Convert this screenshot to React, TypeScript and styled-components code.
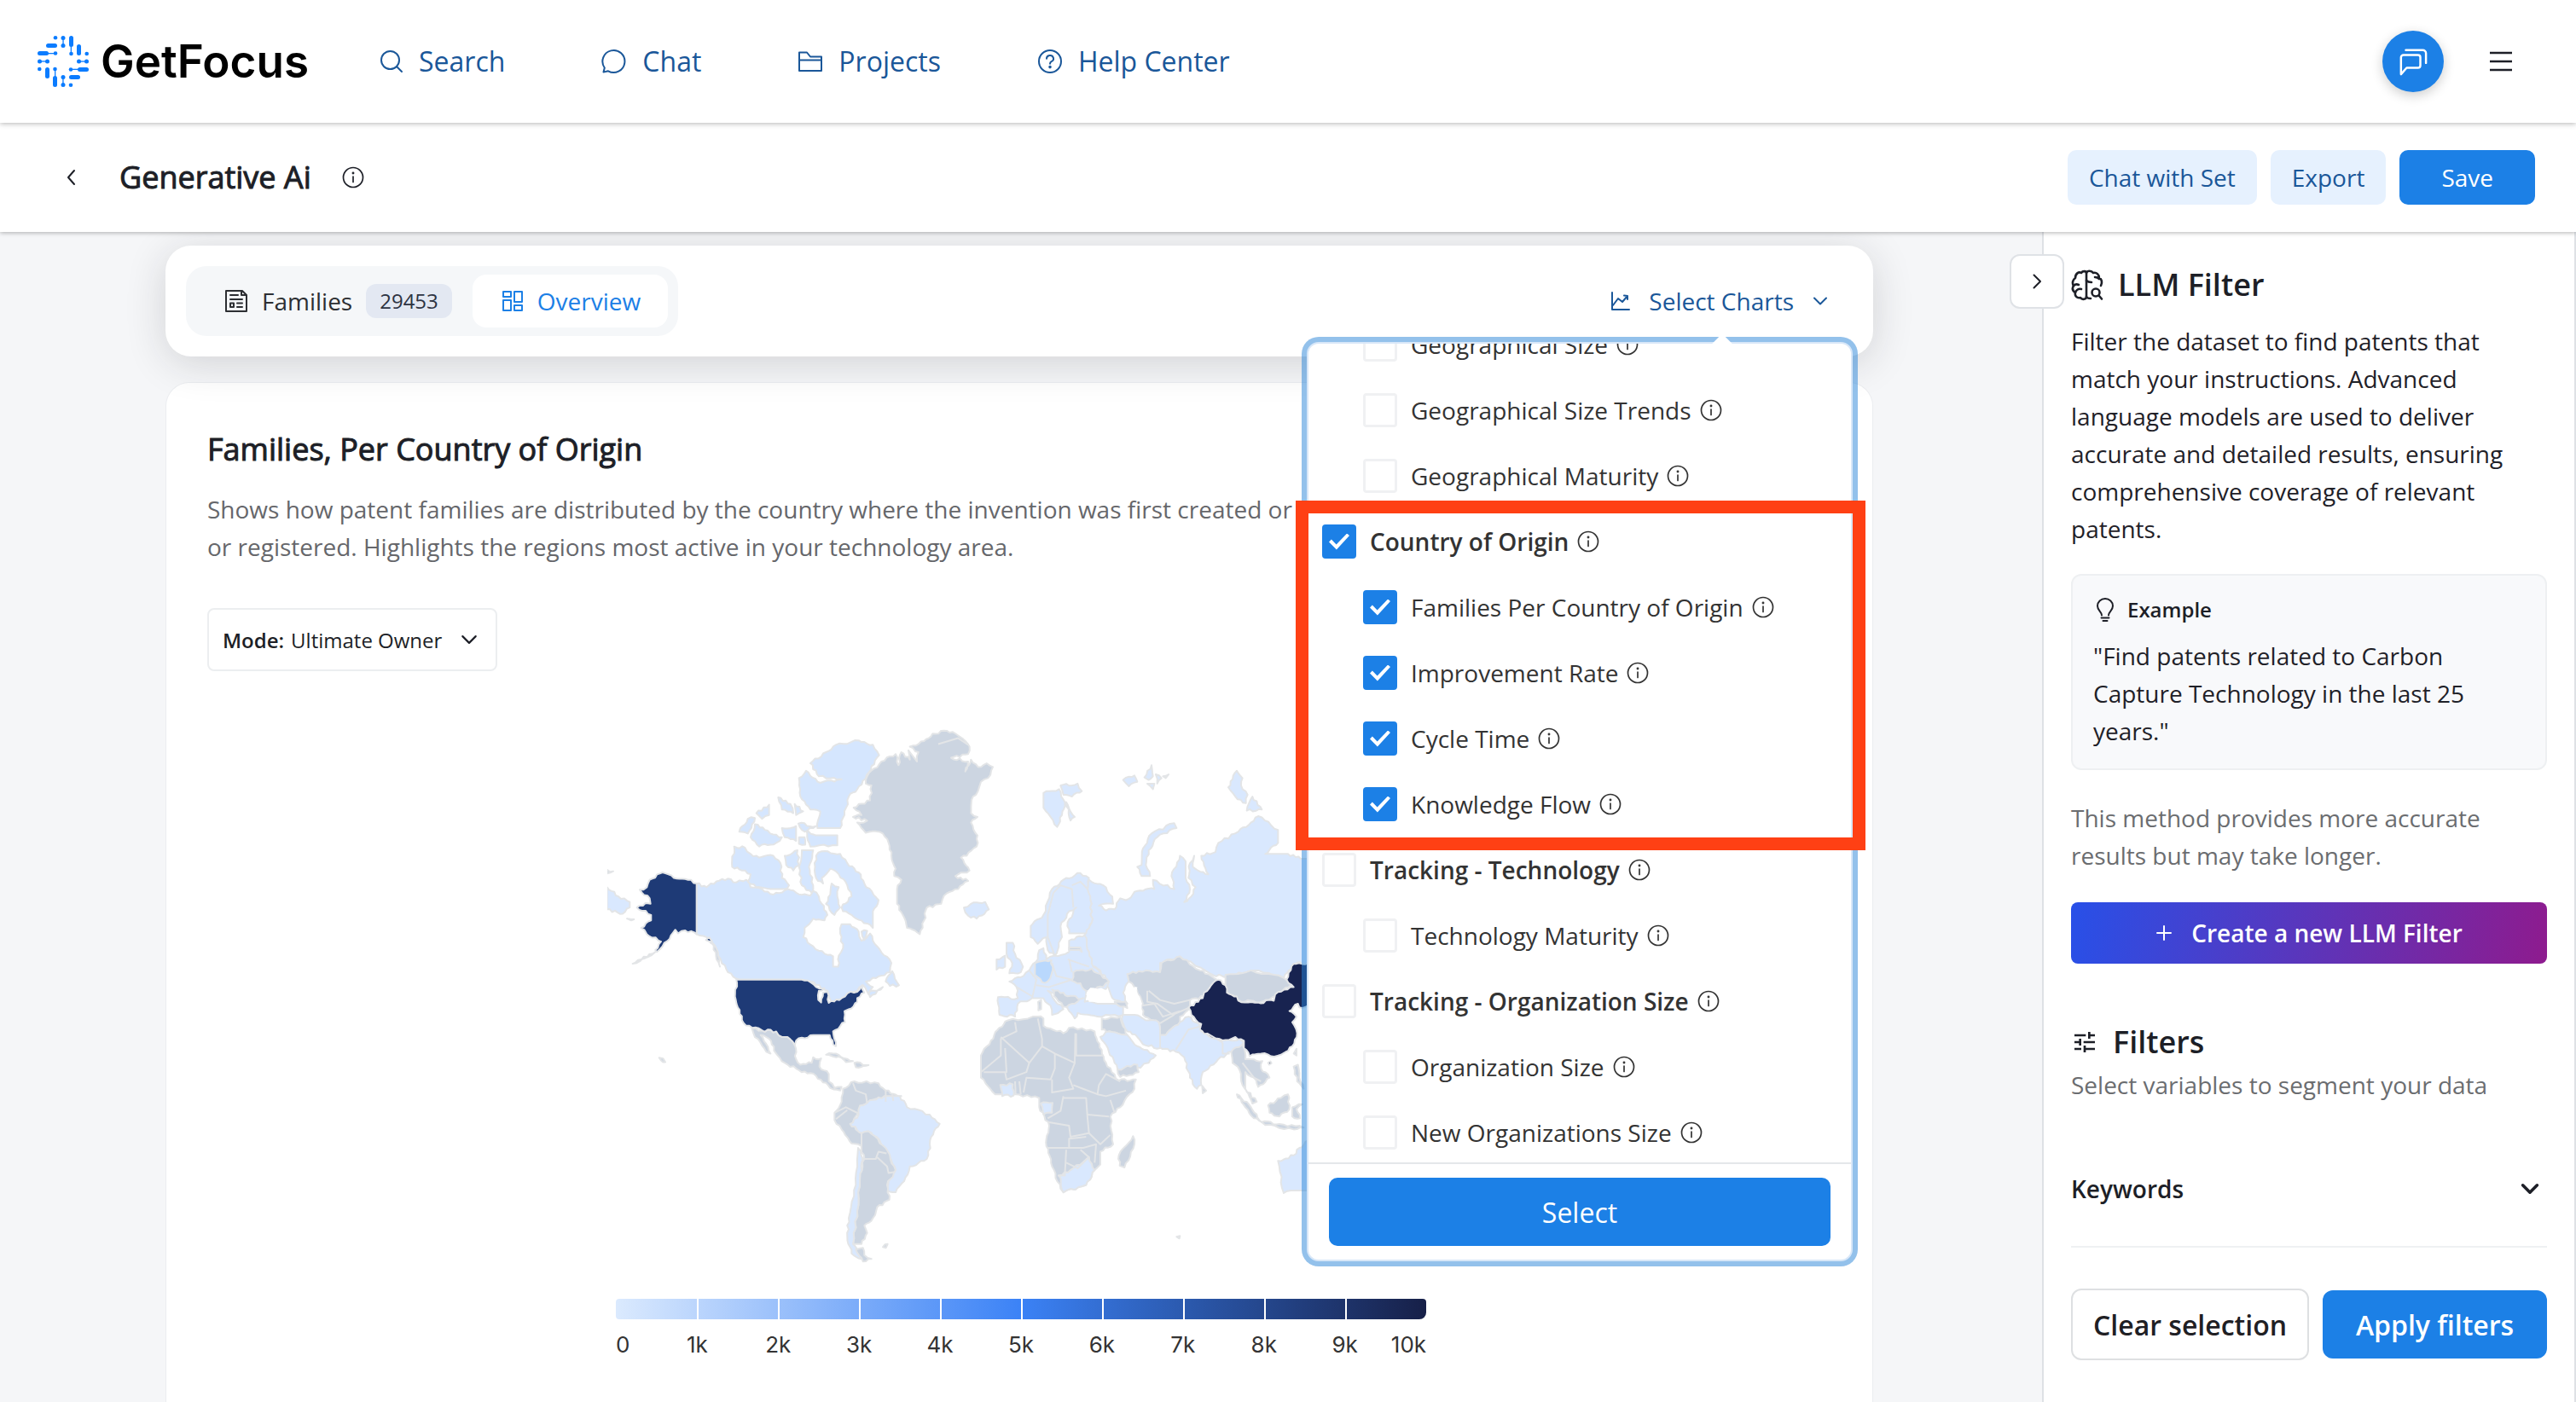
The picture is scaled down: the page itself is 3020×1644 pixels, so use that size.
import React from 'react';
import styled, { createGlobalStyle } from 'styled-components';
import { MdTune } from 'react-icons/md';

const GlobalStyle = createGlobalStyle`
  * { box-sizing: border-box; }
  body { margin: 0; background: #f5f6f8; color: #1d1f27; font-family: "Open Sans", "Noto Sans", sans-serif; }
  button, input, select { font: inherit; color: inherit; }
  h1, h2, h3, p { margin: 0; }
`;

/* ---------- icons ---------- */

const Icon = styled.svg<{ $size: number; $weight?: number }>`
  width: ${p => p.$size}px;
  height: ${p => p.$size}px;
  flex: none;
  fill: none;
  stroke: currentColor;
  stroke-width: ${p => p.$weight ?? 2};
  stroke-linecap: round;
  stroke-linejoin: round;
`;

const SearchIcon = () => (
  <Icon $size={28} viewBox="0 0 28 28"><circle cx="12.5" cy="12.5" r="10.5" /><path d="M20 20l6 6" /></Icon>
);
const ChatIcon = () => (
  <Icon $size={30} viewBox="0 0 30 30"><path d="M3.8 22.5A13 13 0 1 1 8 26.3L2.5 27.6z" /></Icon>
);
const FolderIcon = () => (
  <Icon $size={30} viewBox="0 0 30 30"><path d="M2 26V4.5h9l4 5h13V26zM2 13.5h26" /></Icon>
);
const HelpIcon = () => (
  <Icon $size={30} viewBox="0 0 30 30">
    <circle cx="15" cy="15" r="13" />
    <path d="M11 11.8a4 3.8 0 1 1 5.6 3.4c-1.2.7-1.6 1.2-1.6 2.6" />
    <circle cx="15" cy="21.6" r=".8" fill="currentColor" />
  </Icon>
);
const InfoIcon = () => (
  <Icon $size={26} $weight={1.7} viewBox="0 0 26 26">
    <circle cx="13" cy="13" r="11.5" />
    <path d="M13 12v6.5" /><circle cx="13" cy="8" r=".6" fill="currentColor" />
  </Icon>
);
const Chevron = ({ d, size = 20, weight = 2 }: { d: string; size?: number; weight?: number }) => (
  <Icon $size={size} $weight={weight} viewBox="0 0 20 20"><path d={d} /></Icon>
);
const DOWN = 'M3 6.5l7 7 7-7';
const LEFT = 'M13 2l-7 8 7 8';
const RIGHT = 'M6.5 2.5l7.5 7.5-7.5 7.5';

const BubblesIcon = () => (
  <Icon $size={34} $weight={2.6} viewBox="0 0 36 36">
    <path d="M3 34V13a3 3 0 0 1 3-3h18a3 3 0 0 1 3 3v10a3 3 0 0 1-3 3H10z" />
    <path d="M9 4h21a4 4 0 0 1 4 4v12" />
  </Icon>
);
const MenuIcon = () => (
  <Icon $size={28} viewBox="0 0 28 28" $weight={2.4}><path d="M1 4h26M1 14h26M1 24h26" strokeLinecap="butt" /></Icon>
);
const FamiliesIcon = () => (
  <Icon $size={28} viewBox="0 0 28 28">
    <path d="M2 2h19l5 5v19H2zM20 2v5h6M7 7h9M7 12h14M15 16.500h6M15 21h6M7 16.500h4v4.500h-4z" />
  </Icon>
);
const OverviewIcon = () => (
  <Icon $size={26} viewBox="0 0 26 26">
    <path d="M2 2h9v6H2zM2 12h9v12H2zM15 2h9v12h-9zM15 18h9v6h-9z" />
  </Icon>
);
const LineChartIcon = () => (
  <Icon $size={24} viewBox="0 0 24 24"><path d="M2 2v20h20M3 17l6-8 5 4 6-7M16 5.500l4 .5v4" /></Icon>
);
const BrainIcon = () => (
  <Icon $size={38} $weight={2.6} viewBox="0 0 38 38">
    <path d="M18 5v28c0 3-5 4-7 1-4 1-7-2-6-6-3-2-4-5-2-8-2-3-1-7 2-9 0-5 4-8 7-6 2-3 6-2 6 0z" />
    <path d="M18 5c1-3 6-3 8 0 4-1 7 2 7 6 3 1 4 5 2 9M18 33c1 2 3 2 5 2M18 14c2 2 4 2 6 2M28 10c2 0 4 1 5 2M3 20c2-2 4-2 6-1M5 28c1-3 4-5 7-4" />
    <circle cx="29" cy="28" r="4.500" /><path d="M33 32l3 3.500" />
  </Icon>
);
const BulbIcon = () => (
  <Icon $size={28} viewBox="0 0 28 28">
    <path d="M10 20.500c0-4-5-5.500-5-11a9 8.500 0 0 1 18 0c0 5.500-5 7-5 11M9.500 23.500h9M11.500 27h5" />
  </Icon>
);
const PlusIcon = () => (
  <Icon $size={20} viewBox="0 0 20 20"><path d="M10 2v16M2 10h16" /></Icon>
);

/* A bar is a thick capsule, a dot sits on the grid, a link is a thin line between two dots. */
const LogoMark = () => {
  const quarter = (
    <>
      <circle cx="21" cy="2.300" r="2.300" />
      <rect x="10" y="9" width="13" height="5" rx="2.500" />
      <rect x="0" y="18" width="13" height="5" rx="2.500" />
      <rect x="11" y="20" width="10" height="1.300" /><circle cx="21" cy="20.500" r="2.300" />
      <circle cx="2.500" cy="30" r="2.500" /><circle cx="11.500" cy="30" r="2.500" />
      <rect x="2" y="29.300" width="10" height="1.300" />
    </>
  );
  return (
    <svg width="60" height="60" viewBox="0 0 60 60" fill="#0b7cff" aria-hidden="true">
      {[0, 90, 180, 270].map(a => <g key={a} transform={`rotate(${a} 30 30)`}>{quarter}</g>)}
    </svg>
  );
};

/* ---------- header ---------- */

const Page = styled.div`
  height: 100vh;
  display: flex;
  flex-direction: column;
  overflow: hidden;
`;
const Header = styled.header`
  height: 144px;
  flex: none;
  display: flex;
  align-items: center;
  padding: 0 74px 0 44px;
  background: #fff;
  box-shadow: 0 1px 6px rgba(0, 0, 0, 0.3);
  z-index: 3;
`;
const Brand = styled.a`
  display: flex;
  align-items: center;
  gap: 14px;
  margin-right: 83px;
  font: 600 53px/60px Inter, sans-serif;
  color: #000;
  text-decoration: none;
`;
const Nav = styled.nav`
  display: flex;
  gap: 113px;
  flex: 1;
`;
const NavLink = styled.a`
  display: flex;
  align-items: center;
  gap: 18px;
  font-size: 32px;
  line-height: 44px;
  font-weight: 500;
  color: #1a5799;
  text-decoration: none;
`;
const RoundButton = styled.button`
  display: grid;
  place-items: center;
  width: 72px;
  height: 72px;
  margin-right: 53px;
  padding: 0;
  border: 0;
  border-radius: 50%;
  background: #1c80e6;
  color: #fff;
  box-shadow: 0 4px 14px rgba(0, 0, 0, 0.2);
`;
const PlainButton = styled.button`
  display: grid;
  place-items: center;
  padding: 0;
  border: 0;
  background: none;
`;
const TitleBar = styled.div`
  height: 128px;
  flex: none;
  display: flex;
  align-items: center;
  padding: 0 48px 0 74px;
  background: #fff;
  box-shadow: 0 1px 5px rgba(0, 0, 0, 0.3);
  z-index: 2;
`;
const PageTitle = styled.h1`
  margin: 0 36px 0 46px;
  font-size: 36px;
  line-height: 48px;
  font-weight: 500;
  -webkit-text-stroke: 1px currentColor;
`;
const Actions = styled.div`
  display: flex;
  gap: 16px;
  margin-left: auto;
`;
const ActionButton = styled.button<{ $primary?: boolean }>`
  height: 64px;
  padding: 0 ${p => (p.$primary ? 49 : 25)}px;
  border: 0;
  border-radius: 10px;
  background: ${p => (p.$primary ? '#1c80e6' : '#e6f1fe')};
  color: ${p => (p.$primary ? '#fff' : '#1a5799')};
  font-size: 28px;
  font-weight: 500;
`;

/* ---------- main column ---------- */

const Body = styled.div`
  flex: 1;
  min-height: 0;
  display: flex;
`;
const Main = styled.main`
  flex: 1;
  min-width: 0;
  display: flex;
  flex-direction: column;
  gap: 30px;
  padding: 16px 198px 0 194px;
`;
const Toolbar = styled.section`
  position: relative;
  z-index: 1;
  height: 130px;
  flex: none;
  display: flex;
  align-items: center;
  justify-content: space-between;
  padding: 0 52px 0 24px;
  border-radius: 30px;
  background: #fff;
  box-shadow: 0 8px 48px rgba(30, 34, 40, 0.16);
`;
const Tabs = styled.div`
  display: flex;
  align-items: center;
  height: 82px;
  padding: 0 12px 0 8px;
  border-radius: 24px;
  background: #f5f7f9;
`;
const Tab = styled.button<{ $active?: boolean }>`
  display: flex;
  align-items: center;
  gap: 16px;
  height: 62px;
  padding: 0 ${p => (p.$active ? 32 : 24)}px 0 ${p => (p.$active ? 34 : 37)}px;
  border: 0;
  border-radius: 16px;
  background: ${p => (p.$active ? '#fff' : 'transparent')};
  color: ${p => (p.$active ? '#1c80e6' : '#2d2f33')};
  font-size: 28px;
`;
const Badge = styled.span`
  height: 40px;
  padding: 0 16px;
  border-radius: 12px;
  background: #e3e8f2;
  color: #2d3342;
  font-size: 24px;
  line-height: 40px;
`;
const SelectArea = styled.div`
  position: relative;
`;
const SelectCharts = styled.button`
  display: flex;
  align-items: center;
  gap: 21px;
  padding: 0;
  border: 0;
  background: none;
  color: #1a5799;
  font-size: 28px;
  line-height: 40px;
  font-weight: 500;
`;
const Card = styled.section`
  flex: 1;
  min-height: 0;
  padding: 52px 48px 0;
  border: 1px solid #ebedf0;
  border-bottom: 0;
  border-radius: 28px 28px 0 0;
  background: #fff;
`;
const CardTitle = styled.h2`
  margin-bottom: 22px;
  font-size: 36px;
  line-height: 52px;
  font-weight: 500;
  -webkit-text-stroke: 1px currentColor;
`;
const CardText = styled.p`
  max-width: 1290px;
  font-size: 28px;
  line-height: 44px;
  color: #66676b;
`;
const ModeField = styled.label`
  position: relative;
  display: inline-flex;
  align-items: center;
  gap: 8px;
  height: 74px;
  margin-top: 50px;
  padding: 0 20px 0 16px;
  border: 2px solid #eceef0;
  border-radius: 8px;
  font-size: 24px;
  font-weight: 600;
`;
const ModeSelect = styled.select`
  appearance: none;
  padding: 0;
  border: 0;
  background: none;
  font-weight: 400;
  width: 190px;
`;

/* ---------- chart picker ---------- */

const Popover = styled.div`
  position: absolute;
  top: 68px;
  right: -28px;
  width: 640px;
  border: 2px solid #d8e7f8;
  border-radius: 14px;
  background: #fff;
  box-shadow: 0 0 0 6px rgba(40, 131, 215, 0.5);
`;
const PopoverArrow = styled.span`
  position: absolute;
  top: -8px;
  left: 476px;
  width: 18px;
  height: 18px;
  background: #fff;
  transform: rotate(45deg);
`;
const OptionList = styled.div`
  position: relative;
  display: flex;
  flex-direction: column;
  justify-content: flex-end;
  gap: 7px;
  height: 962px;
  overflow: hidden;
  border-bottom: 2px solid #e4e7ea;
`;
const Option = styled.div<{ $group?: boolean }>`
  flex: none;
  display: flex;
  align-items: center;
  gap: 10px;
  height: 70px;
  padding-left: ${p => (p.$group ? 16 : 64)}px;
  font-weight: ${p => (p.$group ? 600 : 400)};
  color: #333;
`;
const OptionLabel = styled.label`
  display: flex;
  align-items: center;
  gap: 16px;
  font-size: 28px;
  line-height: 40px;
`;
const Checkbox = styled.input`
  appearance: none;
  display: grid;
  place-items: center;
  width: 40px;
  height: 40px;
  margin: 0;
  border: 3px solid #f0f1f3;
  border-radius: 4px;
  background: #fff;
  &:checked {
    border-color: #1c80e6;
    background: #1c80e6;
  }
  &:checked::before {
    content: '';
    width: 24px;
    height: 19px;
    background: #fff;
    clip-path: polygon(0 52%, 12% 37%, 36% 68%, 88% 0, 100% 13%, 37% 100%);
  }
`;
const PopoverFooter = styled.div`
  padding: 16px 24px;
`;
const SelectButton = styled.button`
  width: 100%;
  height: 80px;
  border: 0;
  border-radius: 10px;
  background: #1c80e6;
  color: #fff;
  font-size: 32px;
`;
const Highlight = styled.div`
  position: absolute;
  top: 184px;
  left: -15px;
  right: -17px;
  height: 410px;
  border: 15px solid #ff4014;
  pointer-events: none;
`;

const OPTIONS: { label: string; group?: boolean; checked?: boolean }[] = [
  { label: 'Geographical Size' },
  { label: 'Geographical Size Trends' },
  { label: 'Geographical Maturity' },
  { label: 'Country of Origin', group: true, checked: true },
  { label: 'Families Per Country of Origin', checked: true },
  { label: 'Improvement Rate', checked: true },
  { label: 'Cycle Time', checked: true },
  { label: 'Knowledge Flow', checked: true },
  { label: 'Tracking - Technology', group: true },
  { label: 'Technology Maturity' },
  { label: 'Tracking - Organization Size', group: true },
  { label: 'Organization Size' },
  { label: 'New Organizations Size' },
];

/* ---------- map ---------- */

const MapSvg = styled.svg`
  display: block;
  width: 1010px;
  height: 660px;
  margin: 43px auto 0;
  stroke: #e3e5e7;
  stroke-width: 2;
  stroke-linejoin: round;
  path, polyline { vector-effect: non-scaling-stroke; }
`;

/* Splits every slanted edge into small deterministic wiggles, so that neighbours keep a shared border. */
const coast = (points: string) => {
  const pts = points.split(' ').map(p => p.split(',').map(Number));
  const out: string[] = [];
  pts.forEach((a, i) => {
    const b = pts[(i + 1) % pts.length];
    out.push(`${a[0]},${a[1]}`);
    const dx = b[0] - a[0];
    const dy = b[1] - a[1];
    const len = Math.hypot(dx, dy);
    if (len < 18 || dx === 0 || dy === 0) return;
    const n = Math.min(6, Math.floor(len / 9));
    const flip = a[0] > b[0] || (a[0] === b[0] && a[1] > b[1]) ? -1 : 1;
    for (let k = 1; k < n; k++) {
      const x = a[0] + (dx * k) / n;
      const y = a[1] + (dy * k) / n;
      const r = Math.sin(Math.round(x) * 12.9 + Math.round(y) * 78.2) * 3.4 * flip;
      out.push(`${(x - (dy / len) * r).toFixed(1)},${(y + (dx / len) * r).toFixed(1)}`);
    }
  });
  return `M${out.join('L')}Z`;
};

const GREY = '#ccd5e1';
const LIGHT = '#d9e8fe';
const CANADA = '#d5e6fe';
const US = '#1e3a76';
const CHINA = '#182350';

type Shape = [string, string];

const WEST: Shape[] = [
  [GREY, '932,270 990,250 995,210 975,205 980,185 1030,145 1080,125 1090,155 1100,120 1130,140 1125,115 1155,145 1160,120 1130,105 1180,90 1210,70 1260,62 1300,75 1340,105 1335,125 1275,135 1335,145 1325,172 1345,140 1370,160 1400,150 1422,160 1405,190 1380,200 1370,225 1352,240 1345,285 1368,295 1345,310 1368,345 1365,375 1330,400 1310,405 1340,440 1290,455 1335,468 1300,490 1250,508 1240,530 1190,540 1180,575 1165,612 1120,595 1105,560 1085,530 1085,490 1100,465 1075,455 1080,435 1065,400 1055,365 1035,340 990,335 975,338 945,310 980,305 930,295 960,290'],
  [CANADA, '380,475 415,485 430,475 490,462 520,472 555,465 570,485 610,490 650,505 700,490 730,500 780,508 790,495 810,510 820,530 840,560 830,575 790,570 760,595 755,620 790,645 830,665 860,672 860,700 878,700 880,670 895,650 885,610 890,585 920,585 950,605 960,630 990,610 1015,645 1065,690 1060,715 1000,730 975,740 1000,755 985,775 965,750 945,765 905,780 860,800 840,765 780,740 750,735 530,735 490,715 465,680 440,640 415,620 380,612'],
  [CANADA, '1045,740 1068,712 1092,750 1060,752'],
  [CANADA, '985,770 1035,755 990,782'],
  [CANADA, '795,440 800,400 820,388 885,395 910,420 950,445 970,475 1020,520 1000,550 1000,595 960,575 925,560 895,550 890,540 925,510 910,480 880,450 850,435 820,460 825,475 800,460'],
  [CANADA, '855,475 880,485 875,510 885,540 865,560 835,530 850,505'],
  [CANADA, '512,375 550,378 570,395 600,405 650,400 675,420 680,460 705,480 690,490 640,490 590,485 560,470 570,450 540,440 505,430'],
  [CANADA, '690,400 735,385 740,425 720,440 695,425'],
  [CANADA, '750,385 790,385 775,430 790,480 785,500 750,480 740,430'],
  [CANADA, '780,150 835,120 870,100 950,88 1000,100 1022,128 985,175 945,220 915,240 900,290 885,325 805,325 815,280 780,275 745,240 740,190 765,170 815,203 890,193 810,185'],
  [CANADA, '765,330 800,345 875,345 875,372 780,375'],
  [CANADA, '530,335 560,300 585,298 560,340'],
  [CANADA, '590,285 635,262 635,290 610,300'],
  [CANADA, '667,242 710,260 720,285 680,275'],
  [CANADA, '725,260 755,280 730,290'],
  [CANADA, '570,350 585,315 620,330 680,350 660,365 600,375'],
  [CANADA, '680,325 730,320 730,360 690,350'],
  [CANADA, '740,350 760,350 762,370 740,368'],
  [CANADA, '738,313 800,320 760,335'],
  [CANADA, '960,605 980,603 970,628'],
  [US, '380,475 380,612 340,602 315,610 305,600 285,625 260,645 240,660 235,655 255,632 205,612 185,595 220,575 220,560 170,540 200,528 218,530 215,515 180,492 205,485 215,465 260,445 300,460 350,465'],
  [US, '413,628 424,620 435,632'],
  [GREY, '155,692 235,660 195,678'],
  [GREY, '436,636 455,660 462,700 450,680'],
  [LIGHT, '65,485 105,510 145,525 145,540 120,557 65,545'],
  [GREY, '65,438 87,442 65,448'],
  [GREY, '135,570 160,572 150,575'],
  [GREY, '575,868 610,872 660,875 680,890 700,890 725,912 730,950 745,965 785,960 790,945 818,948 812,970 845,990 845,1010 865,1028 890,1025 885,1035 850,1028 800,995 740,980 690,960 665,940 635,895 605,885 640,935 625,930 580,880'],
  [US, '520,735 750,735 780,742 800,755 830,758 810,765 808,790 818,797 825,770 840,768 845,798 890,785 910,772 945,768 962,750 970,770 945,785 945,795 915,815 900,820 902,850 860,875 870,915 860,910 848,885 790,885 750,892 730,900 725,912 700,890 680,890 660,875 610,872 575,865 545,852 525,810 518,790'],
  [GREY, '835,938 870,935 930,955 905,958 880,943'],
  [GREY, '935,960 985,966 940,972'],
  [GREY, '248,946 262,948 270,958 262,958'],
  [GREY, '895,1030 935,1010 1020,1015 1045,1035 1100,1050 1060,1065 1000,1060 960,1075 950,1095 930,1120 940,1140 960,1150 960,1185 925,1178 890,1140 865,1115 865,1095 890,1065'],
  [LIGHT, '955,1075 1000,1060 1040,1050 1095,1050 1120,1080 1200,1100 1235,1125 1205,1160 1195,1210 1180,1225 1130,1240 1110,1280 1080,1310 1050,1305 1055,1280 1080,1250 1045,1200 1020,1165 985,1145 960,1150 920,1125 950,1100'],
  [GREY, '960,1150 985,1145 1045,1190 1080,1250 1050,1290 1058,1330 1015,1350 1000,1380 970,1400 980,1420 960,1450 930,1450 945,1360 955,1260 970,1220 960,1190'],
  [LIGHT, '948,1190 965,1220 955,1260 945,1360 930,1450 960,1490 925,1475 910,1430 915,1380 940,1290'],
  [GREY, '940,1465 965,1460 970,1480 995,1490 965,1497'],
  [GREY, '1035,1458 1052,1450 1046,1460'],
  [LIGHT, '1320,540 1345,530 1395,525 1408,545 1365,570 1335,562'],
];
const WEST_BORDERS = [
  '930,1015 940,1035 975,1045 980,1070', '1045,1035 1045,1065', '1068,1045 1072,1063',
  '865,1095 905,1080 950,1097', '870,1112 910,1088', '960,1220 1010,1220 1020,1200 1048,1205',
  '1015,1215 1050,1240 1055,1258 1078,1255', '1230,98 1300,82 1335,100',
];

const EAST: Shape[] = [
  [LIGHT, '370,230 400,225 425,220 445,255 435,290 418,322 395,295 370,270'],
  [LIGHT, '430,210 490,205 505,225 470,240 440,235'],
  [LIGHT, '450,255 480,295 465,305'],
  [LIGHT, '650,195 690,183 700,200 670,212'],
  [LIGHT, '725,188 750,155 755,185 740,195'],
  [LIGHT, '765,180 785,190 770,205'],
  [LIGHT, '735,205 760,205 755,220'],
  [LIGHT, '790,185 810,180 800,190'],
  [LIGHT, '1020,215 1050,170 1070,190 1065,210 1088,235 1082,258 1045,240'],
  [LIGHT, '1085,278 1105,240 1138,275'],
  [LIGHT, '700,430 715,425 720,380 750,340 830,312 838,325 770,350 740,385 730,425 745,455 715,455'],
  [LIGHT, '530,465 580,480 612,510 615,530 565,535 590,548 620,545 640,515 660,520 700,495 760,490 755,465 830,490 820,455 850,400 870,415 870,460 885,490 865,525 890,510 905,485 880,460 885,420 900,400 895,430 950,450 925,400 975,390 985,365 1055,335 1100,310 1125,293 1195,330 1195,365 1150,395 1230,395 1275,408 1300,408 1300,690 1255,692 1215,730 1110,710 1005,728 960,720 850,672 780,690 780,715 665,720 670,740 650,770 665,800 620,790 590,750 600,740 560,705 540,700 530,660 510,650 515,615 540,580 535,520 520,490'],
  [LIGHT, '325,590 370,560 400,490 440,465 500,447 530,460 525,490 535,520 540,580 520,610 460,610 455,580 485,540 460,550 430,590 435,620 410,670 385,655 380,620 350,638 325,620'],
  [LIGHT, '210,782 280,785 275,755 250,740 300,725 320,710 350,680 355,655 370,650 380,680 460,660 460,630 515,615 530,660 545,700 600,740 590,760 520,765 515,795 560,800 650,800 650,830 560,835 490,825 480,840 460,820 440,800 400,770 385,765 440,815 400,830 395,805 370,785 330,785 280,800 270,835 215,830'],
  [GREY, '475,715 540,705 600,740 580,755 520,765 500,745 470,738'],
  [GREY, '400,762 440,770 455,780 510,785 480,800 440,808 415,785'],
  [GREY, '460,648 500,648 505,660 485,655 460,655'],
  ['#fff', '520,775 535,757 560,760 585,762 610,795 560,795 530,795'],
  [LIGHT, '240,635 262,635 270,665 298,700 290,715 250,718 260,690 240,665'],
  [LIGHT, '205,680 235,670 235,700 205,708'],
  ['#b9d8fd', '340,690 365,685 398,682 402,710 385,740 365,742 340,722'],
  [GREY, '351,795 362,790 362,815 352,818'],
  [GREY, '620,795 660,795 665,812 640,808'],
  [GREY, '665,720 705,712 780,715 785,690 850,672 920,710 960,725 980,735 935,780 885,790 885,810 850,835 850,850 800,885 780,885 775,850 720,830 715,790 690,755 670,740'],
  ['#fff', '665,765 700,755 702,775 715,800 715,835 690,825 682,795'],
  [GREY, '1010,722 1100,710 1215,730 1240,750 1185,780 1120,797 1055,790 1010,765'],
  [GREY, '1030,920 1070,905 1080,950 1140,955 1135,975 1165,1000 1125,1025 1110,1000 1080,985 1080,1030 1120,1065 1105,1070 1070,1020 1060,980 1035,960'],
  [LIGHT, '650,830 690,830 720,840 775,850 780,885 780,920 720,910 700,890 665,875 645,840'],
  [LIGHT, '780,885 800,885 850,850 880,835 920,860 925,875 1000,900 1060,895 1075,905 1030,930 985,950 930,985 925,1020 910,1030 885,1000 865,945 835,930 780,918'],
  [CHINA, '880,810 930,785 935,770 960,750 985,735 1010,750 1015,770 1050,780 1055,792 1125,797 1180,792 1185,775 1250,755 1225,735 1250,692 1300,690 1300,805 1270,810 1265,800 1235,820 1260,835 1245,850 1262,880 1245,915 1205,938 1170,942 1135,935 1095,942 1075,920 1075,900 1045,890 1010,898 970,895 920,870 925,855 890,830'],
  [CHINA, '1160,960 1168,956 1172,961 1164,965'],
  [GREY, '575,840 640,835 665,885 620,880 575,870'],
  [LIGHT, '570,890 600,875 665,885 700,915 735,925 765,940 740,960 650,990 630,975 600,930'],
  [GREY, '630,978 700,965 705,985 640,998'],
  [GREY, '245,845 350,835 370,840 370,860 440,880 460,865 550,875 575,925 590,960 610,985 635,1008 695,1005 690,1030 640,1080 605,1105 615,1180 570,1200 570,1235 550,1250 520,1290 440,1310 430,1300 400,1240 380,1185 390,1130 355,1080 355,1055 270,1045 200,1045 150,1000 150,940 185,900 215,865'],
  [LIGHT, '218,1020 262,1018 265,1048 225,1050'],
  [LIGHT, '360,1070 402,1068 400,1095 370,1100'],
  [LIGHT, '425,1265 465,1250 530,1215 550,1250 520,1290 440,1310'],
  [GREY, '635,1210 685,1158 690,1180 655,1243 638,1238'],
  [GREY, '928,1022 942,1035 930,1042'],
  [GREY, '1050,1045 1100,1080 1137,1120 1110,1110 1080,1080'],
  [GREY, '1137,1120 1200,1125 1285,1135 1250,1140 1150,1128'],
  [GREY, '1160,1075 1205,1055 1230,1045 1235,1085 1200,1105 1165,1095'],
  [GREY, '1250,970 1265,965 1270,1000 1285,1030 1262,1010'],
  [GREY, '1245,1080 1280,1072 1260,1085 1272,1110 1245,1105'],
  [GREY, '1250,935 1260,922 1260,940'],
  [LIGHT, '1195,1225 1250,1210 1270,1190 1300,1170 1300,1305 1240,1305 1215,1312'],
  [GREY, '838,1430 850,1428 848,1435'],
];
const EAST_BORDERS = [
  '410,670 385,620 385,560 405,500 430,480 470,490 475,540', '525,490 500,470 470,480', '275,755 330,780',
  '320,710 345,735 330,785', '345,750 390,755 470,735', '460,680 470,715', '400,690 415,725 470,735',
  '455,680 530,700', '740,765 780,790 830,800 885,790', '735,765 735,795 770,800 825,830 885,810',
  '720,805 760,800 790,835 850,820', '775,855 830,830',
  '270,850 275,875 220,895 220,940 150,985', '350,840 365,895 365,915 320,960 220,890', '235,920 240,985 160,985',
  '320,960 310,985 240,1005 235,985', '365,915 410,935 480,960 482,880', '485,880 485,940 580,940',
  '410,935 410,975 395,1005 310,1000 300,1040', '480,960 460,1000 475,1030 400,1040 400,1005',
  '475,1020 560,1045 590,1050 660,1035', '560,1045 565,1020 590,990 640,1010', '440,1050 430,1090 385,1110',
  '440,1055 520,1055 525,1110 530,1150 465,1160 460,1130 385,1120', '605,1060 620,1095', '525,1100 600,1105',
  '530,1150 570,1180 605,1155', '460,1190 460,1165 520,1160', '385,1190 510,1190 555,1180 550,1230',
  '450,1195 445,1265 420,1265', '450,1230 490,1245 530,1215 500,1195', '285,1010 290,1045', '270,1010 272,1045',
  '1070,960 1110,1000 1135,1010', '1000,905 1000,935 1025,935', '835,925 880,870 920,862', '945,880 1000,905',
];

const Land = ({ shapes, borders, x }: { shapes: Shape[]; borders: string[]; x: number }) => (
  <g transform={`translate(${x} 830) scale(0.33333 0.43367)`}>
    {shapes.map(([fill, points], i) => (
      <path key={i} d={coast(points)} fill={fill} stroke={fill === '#fff' ? 'none' : undefined} />
    ))}
    {borders.map((b, i) => <polyline key={i} points={b} fill="none" />)}
  </g>
);

const Legend = styled.div`
  width: 954px;
  margin: 33px auto 0;
  padding-left: 4px;
`;
const LegendBar = styled.div`
  display: grid;
  grid-template-columns: repeat(10, 1fr);
  height: 24px;
  border-radius: 4px 4px 8px 4px;
  overflow: hidden;
  background: linear-gradient(90deg, #dbeafe, #3b82f6 50%, #2a56a8 72%, #172048);
`;
const LegendCell = styled.span`
  & + & { border-left: 2px solid #fff; }
`;
const LegendLabels = styled.div`
  display: flex;
  justify-content: space-between;
  margin-top: 14px;
  font: 400 26px/32px Inter, sans-serif;
  color: #333;
`;
const LegendLabel = styled.span`
  width: 95px;
  text-align: center;
  &:first-child, &:last-child { width: 48px; }
  &:first-child { text-align: left; }
  &:last-child { text-align: right; }
`;

/* ---------- sidebar ---------- */

const Sidebar = styled.aside`
  position: relative;
  width: 626px;
  flex: none;
  padding: 36px 32px 0;
  border-left: 2px solid #dee1e5;
  border-right: 2px solid #dee1e5;
  background: #fff;
`;
const CollapseButton = styled.button`
  position: absolute;
  top: 26px;
  left: -40px;
  display: grid;
  place-items: center;
  width: 64px;
  height: 64px;
  padding: 0;
  border: 2px solid #dfe2e6;
  border-radius: 12px;
  background: #fff;
`;
const SideHeading = styled.h2<{ $below: number }>`
  display: flex;
  align-items: center;
  gap: 17px;
  margin-bottom: ${p => p.$below}px;
  font-size: 36px;
  line-height: 52px;
  font-weight: 600;
  svg { flex: none; }
`;
const SideText = styled.p<{ $muted?: boolean }>`
  font-size: 28px;
  line-height: 44px;
  color: ${p => (p.$muted ? '#6b6d70' : '#1f2128')};
`;
const Example = styled.div`
  margin: 31px 0 34px;
  padding: 20px 24px 22px;
  border: 2px solid #eef0f2;
  border-radius: 12px;
  background: #f8f9fb;
`;
const ExampleTitle = styled.h3`
  display: flex;
  align-items: center;
  gap: 12px;
  margin-bottom: 12px;
  font-size: 24px;
  line-height: 40px;
  font-weight: 600;
`;
const GradientButton = styled.button`
  display: flex;
  align-items: center;
  justify-content: center;
  gap: 22px;
  width: 100%;
  height: 72px;
  margin: 33px 0 66px;
  border: 0;
  border-radius: 8px;
  background: linear-gradient(100deg, #2850e8, #8e1b8e);
  color: #fff;
  font-size: 28px;
  font-weight: 600;
`;
const Accordion = styled.button`
  display: flex;
  align-items: center;
  justify-content: space-between;
  width: 100%;
  height: 136px;
  margin-top: 33px;
  padding: 0 8px 0 0;
  border: 0;
  border-bottom: 2px solid #eff1f3;
  background: none;
  font-size: 28px;
  font-weight: 600;
`;
const FooterRow = styled.div`
  display: flex;
  align-items: center;
  gap: 16px;
  margin-top: 48px;
`;
const FooterButton = styled.button<{ $primary?: boolean }>`
  flex: ${p => (p.$primary ? '1 1 auto' : 'none')};
  height: ${p => (p.$primary ? 80 : 84)}px;
  padding: 0 24px;
  border: ${p => (p.$primary ? '0' : '2px solid #dee0e2')};
  border-radius: 12px;
  background: ${p => (p.$primary ? '#1c80e6' : '#fff')};
  color: ${p => (p.$primary ? '#fff' : '#1f2024')};
  font-size: 32px;
  font-weight: 600;
`;

export default function App() {
  return (
    <Page>
      <GlobalStyle />
      <Header>
        <Brand href="#home"><LogoMark />GetFocus</Brand>
        <Nav>
          <NavLink href="#search"><SearchIcon />Search</NavLink>
          <NavLink href="#chat"><ChatIcon />Chat</NavLink>
          <NavLink href="#projects"><FolderIcon />Projects</NavLink>
          <NavLink href="#help"><HelpIcon />Help Center</NavLink>
        </Nav>
        <RoundButton aria-label="Messages"><BubblesIcon /></RoundButton>
        <PlainButton aria-label="Menu"><MenuIcon /></PlainButton>
      </Header>

      <TitleBar>
        <PlainButton aria-label="Back"><Chevron d={LEFT} /></PlainButton>
        <PageTitle>Generative Ai</PageTitle>
        <InfoIcon />
        <Actions>
          <ActionButton>Chat with Set</ActionButton>
          <ActionButton>Export</ActionButton>
          <ActionButton $primary>Save</ActionButton>
        </Actions>
      </TitleBar>

      <Body>
        <Main>
          <Toolbar>
            <Tabs>
              <Tab><FamiliesIcon />Families<Badge>29453</Badge></Tab>
              <Tab $active><OverviewIcon />Overview</Tab>
            </Tabs>
            <SelectArea>
              <SelectCharts><LineChartIcon />Select Charts<Chevron d={DOWN} /></SelectCharts>
              <Popover>
                <PopoverArrow />
                <OptionList>
                  {OPTIONS.map((o, i) => (
                    <Option key={o.label} $group={o.group}>
                      <OptionLabel htmlFor={`chart-${i}`}>
                        <Checkbox id={`chart-${i}`} type="checkbox" defaultChecked={o.checked} />
                        {o.label}
                      </OptionLabel>
                      <InfoIcon />
                    </Option>
                  ))}
                </OptionList>
                <PopoverFooter><SelectButton>Select</SelectButton></PopoverFooter>
                <Highlight />
              </Popover>
            </SelectArea>
          </Toolbar>

          <Card>
            <CardTitle>Families, Per Country of Origin</CardTitle>
            <CardText>
              Shows how patent families are distributed by the country where the invention was first created or
              or registered. Highlights the regions most active in your technology area.
            </CardText>
            <ModeField>
              Mode:
              <ModeSelect defaultValue="Ultimate Owner"><option>Ultimate Owner</option></ModeSelect>
              <Chevron d={DOWN} size={22} />
            </ModeField>
            <MapSvg viewBox="690 830 1010 660" role="img" aria-label="World map">
              <defs><clipPath id="frame"><rect x="712" y="830" width="972" height="660" /></clipPath></defs>
              <g clipPath="url(#frame)">
                <Land shapes={WEST} borders={WEST_BORDERS} x={690} />
                <Land shapes={EAST} borders={EAST_BORDERS} x={1100} />
              </g>
            </MapSvg>
            <Legend>
              <LegendBar>{Array.from({ length: 10 }, (_, i) => <LegendCell key={i} />)}</LegendBar>
              <LegendLabels>
                {Array.from({ length: 11 }, (_, i) => <LegendLabel key={i}>{i ? `${i}k` : '0'}</LegendLabel>)}
              </LegendLabels>
            </Legend>
          </Card>
        </Main>

        <Sidebar>
          <CollapseButton aria-label="Collapse"><Chevron d={RIGHT} /></CollapseButton>
          <SideHeading $below={18}><BrainIcon />LLM Filter</SideHeading>
          <SideText>
            Filter the dataset to find patents that match your instructions. Advanced language models are used to
            deliver accurate and detailed results, ensuring comprehensive coverage of relevant patents.
          </SideText>
          <Example>
            <ExampleTitle><BulbIcon />Example</ExampleTitle>
            <SideText>"Find patents related to Carbon Capture Technology in the last 25 years."</SideText>
          </Example>
          <SideText $muted>This method provides more accurate results but may take longer.</SideText>
          <GradientButton><PlusIcon />Create a new LLM Filter</GradientButton>
          <SideHeading $below={2}><MdTune size={32} />Filters</SideHeading>
          <SideText $muted>Select variables to segment your data</SideText>
          <Accordion>Keywords<Chevron d={DOWN} size={24} weight={3} /></Accordion>
          <FooterRow>
            <FooterButton>Clear selection</FooterButton>
            <FooterButton $primary>Apply filters</FooterButton>
          </FooterRow>
        </Sidebar>
      </Body>
    </Page>
  );
}
